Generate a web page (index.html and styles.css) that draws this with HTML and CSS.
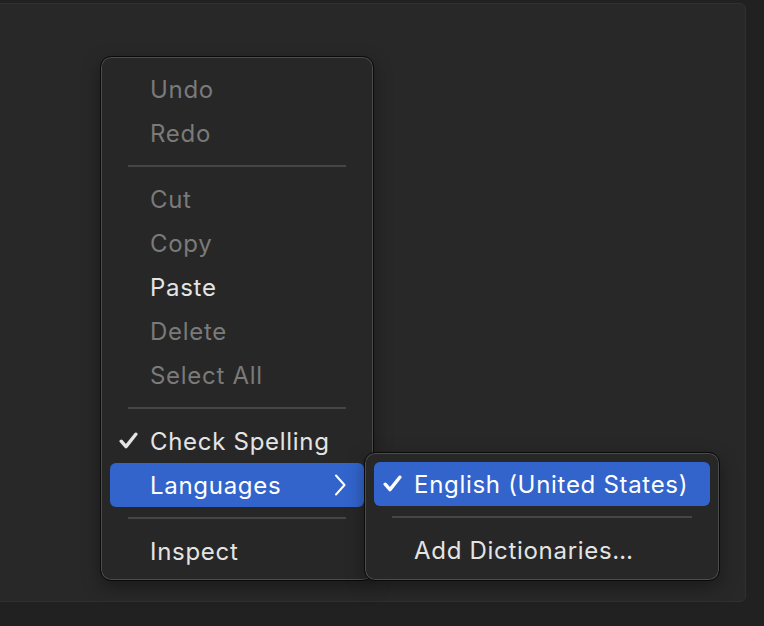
FILE: index.html
```html
<!DOCTYPE html>
<html lang="en">
<head>
<meta charset="utf-8">
<title>Context menu</title>
<link rel="stylesheet" href="styles.css">
</head>
<body>
<div class="panel"></div>

<div class="menu main-menu">
  <div class="item disabled"><span class="label">Undo</span></div>
  <div class="item disabled"><span class="label">Redo</span></div>
  <div class="sep"></div>
  <div class="item disabled"><span class="label">Cut</span></div>
  <div class="item disabled"><span class="label">Copy</span></div>
  <div class="item"><span class="label">Paste</span></div>
  <div class="item disabled"><span class="label">Delete</span></div>
  <div class="item disabled"><span class="label">Select All</span></div>
  <div class="sep"></div>
  <div class="item">
    <svg class="check" viewBox="0 0 19 17" width="19" height="17"><path d="M2.2 9.2 L7 14.6 L16.8 2.2" fill="none" stroke="currentColor" stroke-width="3.4" stroke-linecap="round" stroke-linejoin="round"/></svg>
    <span class="label">Check Spelling</span>
  </div>
  <div class="item active">
    <span class="label">Languages</span>
    <svg class="chev" viewBox="0 0 12 22" width="12" height="22"><path d="M2 1.5 L10.5 11 L2 20.5" fill="none" stroke="currentColor" stroke-width="2" stroke-linecap="round" stroke-linejoin="round"/></svg>
  </div>
  <div class="sep"></div>
  <div class="item"><span class="label">Inspect</span></div>
</div>

<div class="menu sub-menu">
  <div class="item active">
    <svg class="check" viewBox="0 0 19 17" width="19" height="17"><path d="M2.2 9.2 L7 14.6 L16.8 2.2" fill="none" stroke="currentColor" stroke-width="3.4" stroke-linecap="round" stroke-linejoin="round"/></svg>
    <span class="label">English (United States)</span>
  </div>
  <div class="sep"></div>
  <div class="item"><span class="label">Add Dictionaries…</span></div>
</div>
</body>
</html>
```

FILE: styles.css
```css
html, body {
  margin: 0;
  padding: 0;
  width: 764px;
  height: 626px;
  overflow: hidden;
  background: #212121;
  font-family: Inter, "Noto Sans", "Liberation Sans", sans-serif;
}

body {
  padding-top: 3px;
  box-sizing: border-box;
  position: relative;
}

.panel {
  margin-left: -10px;
  width: 756px;
  height: 599px;
  box-sizing: border-box;
  background: #282828;
  border: 1px solid #303030;
  border-radius: 6px;
}

.menu {
  position: absolute;
  box-sizing: border-box;
  background: #272727;
  border: 1px solid #0b0b0b;
  border-radius: 11px;
  box-shadow: inset 0 0 0 1px #4c4c4c, 0 6px 18px rgba(0, 0, 0, 0.35);
}

.main-menu {
  left: 100px;
  top: 56px;
  width: 274px;
  padding: 10px 9px 7px;
}

.sub-menu {
  left: 364px;
  top: 452px;
  width: 356px;
  padding: 9px 9px 8px;
}

.item {
  position: relative;
  height: 44px;
  display: flex;
  align-items: center;
  padding-left: 40px;
  border-radius: 6px;
  color: #e4e4e4;
  font-size: 24px;
  letter-spacing: 0.7px;
}

.item.disabled {
  color: #7a7a7a;
}

.item.active {
  background: #3264cc;
  color: #ffffff;
}

.label {
  white-space: nowrap;
}

.check {
  position: absolute;
  left: 9px;
  top: 13px;
}

.chev {
  position: absolute;
  right: 18px;
  top: 11px;
}

.sep {
  height: 22px;
  display: flex;
  align-items: center;
  padding: 0 18px;
}

.sep::before {
  content: "";
  flex: 1;
  height: 2px;
  background: #464646;
}
```
